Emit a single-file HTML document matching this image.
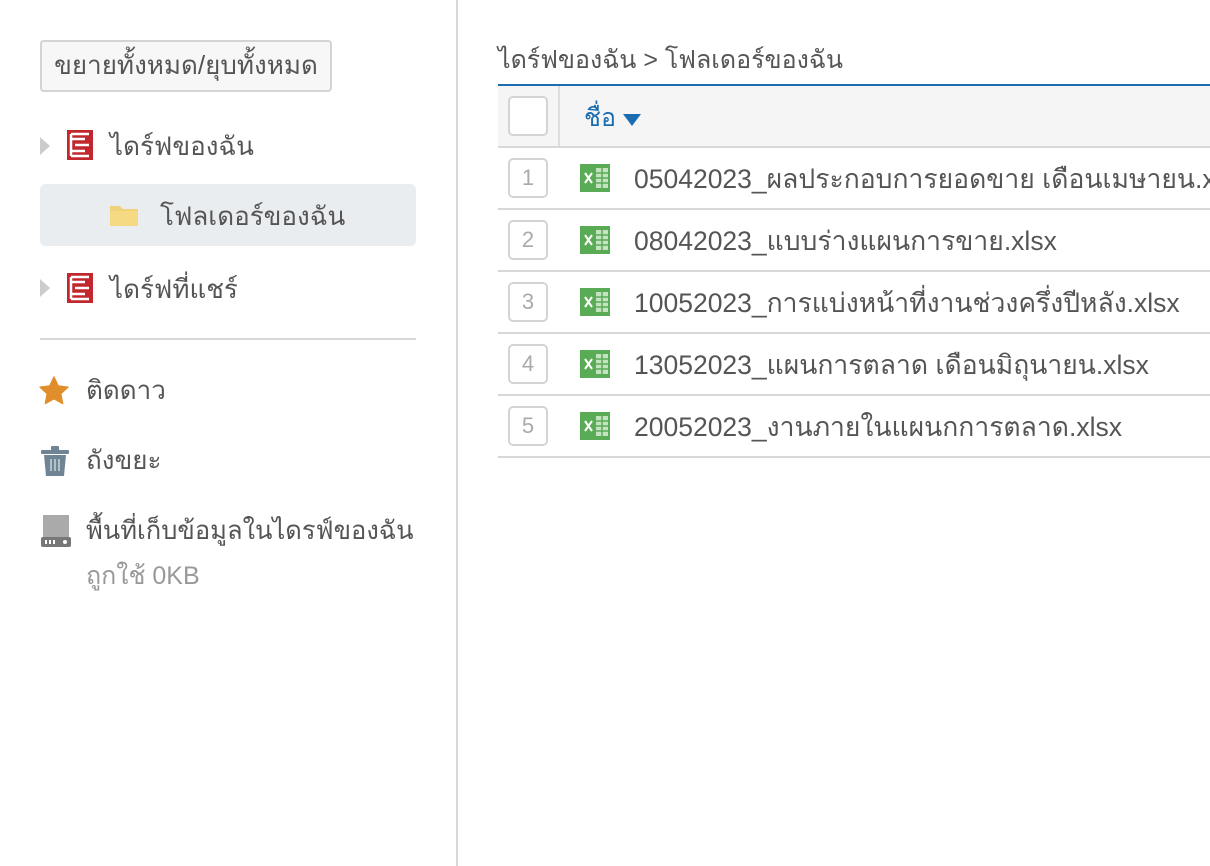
<!DOCTYPE html>
<html><head><meta charset="utf-8"><style>
*{box-sizing:border-box;margin:0;padding:0}
body{width:1210px;height:866px;background:#fff;font-family:"Liberation Sans","DejaVu Sans",sans-serif;color:#555;position:relative;overflow:hidden}
.abs{position:absolute;white-space:nowrap}
.vline{position:absolute;left:456px;top:0;width:2px;height:866px;background:#d8d8d8}
.btn{left:40px;top:40px;width:292px;height:52px;border:2px solid #d4d4d4;border-radius:4px;background:#f7f7f7;font-size:26px;line-height:46px;text-align:center;color:#555}
.tri{width:0;height:0;border-left:10px solid #ccc;border-top:9px solid transparent;border-bottom:9px solid transparent}
.t{font-size:26px;color:#555}
.row{position:absolute;left:498px;width:712px;height:62px;border-bottom:2px solid #d8d8d8}
.num{position:absolute;left:10px;top:10px;width:40px;height:40px;border:2px solid #d4d4d4;border-radius:5px;text-align:center;line-height:36px;font-size:22px;color:#aaa}
.xl{position:absolute;left:82px;top:16px}
.fn{position:absolute;left:136px;top:10px;font-size:26.5px;color:#555;white-space:nowrap}
</style></head><body>
<div class="vline"></div>
<div class="abs btn">ขยายทั้งหมด/ยุบทั้งหมด</div>

<div class="abs tri" style="left:40px;top:137px"></div>
<svg class="abs" style="left:67px;top:130px" width="26" height="30" viewBox="0 0 26 30"><path d="M0 0h26v30H0z" fill="#c1272d"/><path d="M4 4h18M4 9h14M8 15h14M4 21h14M4 26h18M4 4v22" stroke="#fff" stroke-width="2.5" fill="none"/></svg>
<div class="abs t" style="left:110px;top:126px">ไดร์ฟของฉัน</div>

<div class="abs" style="left:40px;top:184px;width:376px;height:62px;background:#e9edf0;border-radius:6px"></div>
<svg class="abs" style="left:110px;top:204px" width="28" height="22"><path d="M0 2h10l3 3h15v17H0z" fill="#f0d27a"/><path d="M0 7h28v15H0z" fill="#f5da83"/></svg>
<div class="abs t" style="left:160px;top:196px">โฟลเดอร์ของฉัน</div>

<div class="abs tri" style="left:40px;top:279px"></div>
<svg class="abs" style="left:67px;top:273px" width="26" height="30" viewBox="0 0 26 30"><path d="M0 0h26v30H0z" fill="#c1272d"/><path d="M4 4h18M4 9h14M8 15h14M4 21h14M4 26h18M4 4v22" stroke="#fff" stroke-width="2.5" fill="none"/></svg>
<div class="abs t" style="left:110px;top:269px">ไดร์ฟที่แชร์</div>

<div class="abs" style="left:40px;top:338px;width:376px;height:2px;background:#d8d8d8"></div>

<svg class="abs" style="left:38px;top:375px" width="32" height="32" viewBox="0 0 24 24"><path d="M12 1.5l3.2 6.7 7.3.9-5.4 5 1.4 7.3L12 17.8l-6.5 3.6 1.4-7.3-5.4-5 7.3-.9z" fill="#e08e2b" stroke="#e08e2b" stroke-linejoin="round"/></svg>
<div class="abs t" style="left:86px;top:370px">ติดดาว</div>

<svg class="abs" style="left:41px;top:446px" width="28" height="30" viewBox="0 0 28 30"><rect x="0" y="4" width="28" height="4" rx="1" fill="#6f8595"/><rect x="10" y="0" width="8" height="5" rx="1" fill="#6f8595"/><path d="M3 9h22l-2 21H5z" fill="#6f8595"/><path d="M10 13v12M14 13v12M18 13v12" stroke="#c8d3da" stroke-width="1.5"/></svg>
<div class="abs t" style="left:86px;top:440px">ถังขยะ</div>

<svg class="abs" style="left:41px;top:515px" width="30" height="32"><rect x="2" y="0" width="26" height="24" fill="#aaa"/><rect x="0" y="22" width="30" height="10" rx="2" fill="#777"/><rect x="4" y="25" width="2" height="4" fill="#fff"/><rect x="8" y="25" width="2" height="4" fill="#fff"/><rect x="12" y="25" width="2" height="4" fill="#fff"/><circle cx="24" cy="27" r="2" fill="#fff"/></svg>
<div class="abs t" style="left:86px;top:511px;font-size:25.5px">พื้นที่เก็บข้อมูลในไดรฟ์ของฉัน</div>
<div class="abs" style="left:86px;top:556px;font-size:25px;color:#999">ถูกใช้ 0KB</div>

<div class="abs" style="left:498px;top:40px;font-size:25px;color:#555">ไดร์ฟของฉัน &gt; โฟลเดอร์ของฉัน</div>

<div class="abs" style="left:498px;top:84px;width:712px;height:64px;background:#f5f5f5;border-top:2px solid #1a6db0;border-bottom:2px solid #d8d8d8"></div>
<div class="abs" style="left:508px;top:96px;width:40px;height:40px;border:2px solid #d4d4d4;border-radius:5px;background:#fff"></div>
<div class="abs" style="left:558px;top:86px;width:2px;height:60px;background:#ddd"></div>
<div class="abs" style="left:584px;top:98px;font-size:25px;color:#1a6db0">ชื่อ</div>
<div class="abs" style="left:623px;top:114px;border-top:12px solid #1a6db0;border-left:9px solid transparent;border-right:9px solid transparent;width:0;height:0"></div>

<div class="row" style="top:148px"><div class="num">1</div><svg class="xl" width="30" height="28"><rect width="30" height="28" fill="#5aab55"/><rect x="16" y="4" width="12" height="20" fill="#c5e3c1"/><path d="M16 9h12M16 14h12M16 19h12M22 4v20" stroke="#5aab55" stroke-width="1.5"/><path d="M5 9l7 10M12 9l-7 10" stroke="#fff" stroke-width="2"/></svg><div class="fn">05042023_ผลประกอบการยอดขาย เดือนเมษายน.xlsx</div></div>
<div class="row" style="top:210px"><div class="num">2</div><svg class="xl" width="30" height="28"><rect width="30" height="28" fill="#5aab55"/><rect x="16" y="4" width="12" height="20" fill="#c5e3c1"/><path d="M16 9h12M16 14h12M16 19h12M22 4v20" stroke="#5aab55" stroke-width="1.5"/><path d="M5 9l7 10M12 9l-7 10" stroke="#fff" stroke-width="2"/></svg><div class="fn">08042023_แบบร่างแผนการขาย.xlsx</div></div>
<div class="row" style="top:272px"><div class="num">3</div><svg class="xl" width="30" height="28"><rect width="30" height="28" fill="#5aab55"/><rect x="16" y="4" width="12" height="20" fill="#c5e3c1"/><path d="M16 9h12M16 14h12M16 19h12M22 4v20" stroke="#5aab55" stroke-width="1.5"/><path d="M5 9l7 10M12 9l-7 10" stroke="#fff" stroke-width="2"/></svg><div class="fn">10052023_การแบ่งหน้าที่งานช่วงครึ่งปีหลัง.xlsx</div></div>
<div class="row" style="top:334px"><div class="num">4</div><svg class="xl" width="30" height="28"><rect width="30" height="28" fill="#5aab55"/><rect x="16" y="4" width="12" height="20" fill="#c5e3c1"/><path d="M16 9h12M16 14h12M16 19h12M22 4v20" stroke="#5aab55" stroke-width="1.5"/><path d="M5 9l7 10M12 9l-7 10" stroke="#fff" stroke-width="2"/></svg><div class="fn">13052023_แผนการตลาด เดือนมิถุนายน.xlsx</div></div>
<div class="row" style="top:396px"><div class="num">5</div><svg class="xl" width="30" height="28"><rect width="30" height="28" fill="#5aab55"/><rect x="16" y="4" width="12" height="20" fill="#c5e3c1"/><path d="M16 9h12M16 14h12M16 19h12M22 4v20" stroke="#5aab55" stroke-width="1.5"/><path d="M5 9l7 10M12 9l-7 10" stroke="#fff" stroke-width="2"/></svg><div class="fn">20052023_งานภายในแผนกการตลาด.xlsx</div></div>
</body></html>
